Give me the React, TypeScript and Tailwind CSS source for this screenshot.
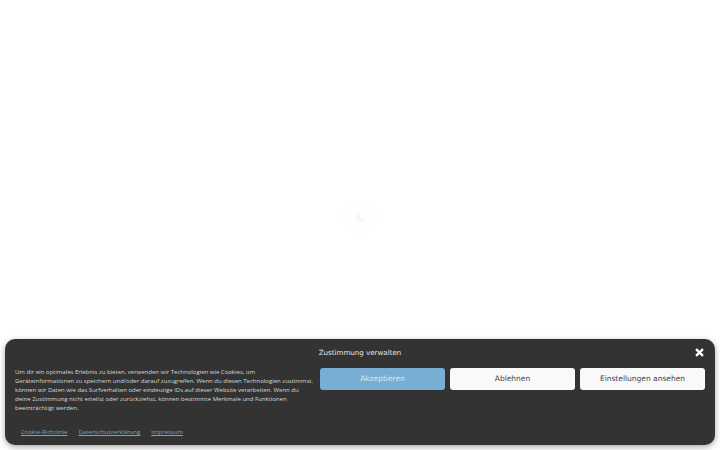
const links = ["Cookie-Richtlinie", "Datenschutzerklärung", "Impressum"];
const buttons = [
  { label: "Akzeptieren", cls: "bg-[#79aed4] text-[#dbe9f3]" },
  { label: "Ablehnen", cls: "bg-[#f9f9f9] text-[#444444]" },
  { label: "Einstellungen ansehen", cls: "bg-[#f9f9f9] text-[#444444]" },
];

export default function App() {
  return (
    <div className="relative flex h-[450px] w-[720px] items-start justify-center overflow-hidden bg-white pt-[202px]">
      {/* preloader */}
      <div className="flex h-[30px] w-[30px] items-center justify-center rounded-full shadow-[0_0_4px_rgba(0,0,0,0.03)]">
        <svg width="14" height="14" viewBox="0 0 24 24" fill="#f8f8f8">
          <path d="M14 2a10 10 0 1 0 8 16A11 11 0 0 1 14 2z" />
        </svg>
      </div>

      {/* cookie banner */}
      <div className="absolute bottom-[5px] left-[5px] right-[5px] h-[106px] rounded-[10px] bg-[#333333] px-[10px] shadow-[0_2px_6px_rgba(0,0,0,0.35)] [font-family:'Open_Sans',sans-serif]">
        <div className="relative flex h-[27px] items-center justify-center pt-[1px]">
          <span className="text-[7.1px] leading-none text-[#e8e8e8] [font-family:'DejaVu_Sans',sans-serif]">
            Zustimmung verwalten
          </span>
          <svg className="absolute right-[1px] top-[9px]" width="9" height="9" viewBox="0 0 10 10">
            <path d="M1.2 1.2 8.8 8.8M8.8 1.2 1.2 8.8" stroke="#ffffff" strokeWidth="2.6" />
          </svg>
        </div>
        <div className="mt-[2px] grid grid-cols-[300px_385px] gap-x-[5px]">
          <div className="flex flex-col">
            <p className="text-[6px] leading-[9px] text-[#d8d8d8]">
              Um dir ein optimales Erlebnis zu bieten, verwenden wir Technologien wie Cookies, um Geräteinformationen zu speichern und/oder darauf zuzugreifen. Wenn du diesen Technologien zustimmst, können wir Daten wie das Surfverhalten oder eindeutige IDs auf dieser Website verarbeiten. Wenn du deine Zustimmung nicht erteilst oder zurückziehst, können bestimmte Merkmale und Funktionen beeinträchtigt werden.
            </p>
            <div className="ml-[6px] mt-[15px] flex gap-[11px]">
              {links.map((link) => (
                <a key={link} className="text-[6px] leading-[9px] text-[#7aa5c4] underline">
                  {link}
                </a>
              ))}
            </div>
          </div>
          <div className="flex items-start gap-[5px]">
            {buttons.map((b) => (
              <button
                key={b.label}
                className={`flex h-[22px] w-[125px] items-center justify-center rounded-[3px] text-[7.5px] [font-family:'DejaVu_Sans',sans-serif] ${b.cls}`}
              >
                {b.label}
              </button>
            ))}
          </div>
        </div>
      </div>
    </div>
  );
}
